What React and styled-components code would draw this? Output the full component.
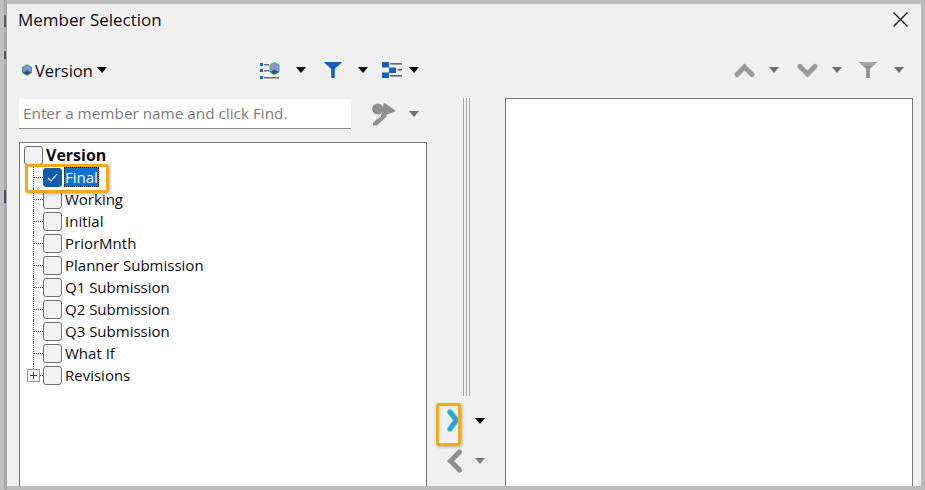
import React from "react";
import styled, { createGlobalStyle } from "styled-components";

const members = [
  "Final",
  "Working",
  "Initial",
  "PriorMnth",
  "Planner Submission",
  "Q1 Submission",
  "Q2 Submission",
  "Q3 Submission",
  "What If",
  "Revisions",
];

const GlobalStyle = createGlobalStyle`
  html, body {
    margin: 0;
    padding: 0;
    width: 925px;
    height: 490px;
    overflow: hidden;
    background: #bcbcbc;
  }
`;

const Page = styled.div`
  width: 925px;
  height: 490px;
  padding: 4px 4px 4px 7px;
  box-sizing: border-box;
  overflow: hidden;
  position: relative;
  background: linear-gradient(90deg, #c0c0c0 0 4px, #a8a8a8 4px 7px, #bcbcbc 7px);
  font-family: "Open Sans", "Noto Sans", sans-serif;
  color: #0c0c14;
`;

// slivers of the page behind the dialog, showing on the left edge
const BehindMark = styled.span`
  position: absolute;
  left: 4px;
  top: ${(p) => p.$top}px;
  width: 2px;
  height: ${(p) => p.$height}px;
  background: ${(p) => p.$color || "#5c5c5c"};
`;

const Dialog = styled.div`
  height: 482px;
  background: #f0f0f0;
  display: flex;
  flex-direction: column;
  overflow: hidden;
`;

const TitleBar = styled.div`
  height: 30px;
  padding: 0 13px 0 11px;
  display: flex;
  align-items: center;
  justify-content: space-between;
  font-size: 17px;
`;

const Toolbar = styled.div`
  height: 64px;
  box-sizing: border-box;
  padding: 8px 0 0 15px;
  display: flex;
  align-items: center;
  flex-shrink: 0;
`;

const ToolGroup = styled.div`
  display: flex;
  align-items: center;
  margin-left: ${(p) => p.$left || 0}px;
`;

const VersionLabel = styled.div`
  font-size: 16.5px;
  margin: 0 4px 0 3px;
`;

const Caret = styled.span`
  display: inline-block;
  width: 0;
  height: 0;
  margin-left: ${(p) => p.$left || 0}px;
  border-left: ${(p) => p.$size || 5.5}px solid transparent;
  border-right: ${(p) => p.$size || 5.5}px solid transparent;
  border-top: ${(p) => p.$size || 6}px solid ${(p) => p.$color || "#000"};
`;

const Body = styled.div`
  flex: 1;
  display: flex;
  min-height: 0;
`;

const LeftColumn = styled.div`
  width: 408px;
  margin-left: 12px;
  display: flex;
  flex-direction: column;
`;

const FindRow = styled.div`
  display: flex;
  align-items: center;
  height: 31px;
  margin-bottom: 13px;
`;

const FindInput = styled.div`
  width: 332px;
  height: 30px;
  box-sizing: border-box;
  background: #fff;
  border-bottom: 1px solid #8a8a8a;
  padding-left: 4px;
  font-size: 15.3px;
  line-height: 29px;
  color: #7c7c7c;
  white-space: nowrap;
`;

const TreePanel = styled.div`
  flex: 1;
  background: #fff;
  border: 1px solid #777;
  border-bottom: none;
  position: relative;
  padding-top: 1px;
`;

const TreeRow = styled.div`
  height: 22px;
  display: flex;
  align-items: center;
  font-size: 15px;
  position: relative;
`;

const Branch = styled.span`
  width: 23px;
  height: 22px;
  position: relative;
  flex-shrink: 0;

  &::before {
    content: "";
    position: absolute;
    left: 13px;
    top: 0;
    height: ${(p) => (p.$last ? 11 : 22)}px;
    border-left: 1px dotted #555;
  }

  &::after {
    content: "";
    position: absolute;
    left: 14px;
    top: 11px;
    width: 9px;
    border-top: 1px dotted #555;
  }
`;

const Check = styled.span`
  width: 19px;
  height: 19px;
  box-sizing: border-box;
  margin-left: ${(p) => (p.$root ? 4 : 0)}px;
  border-radius: 3px;
  border: 1px solid ${(p) => (p.$on ? "#0f5cb0" : "#6f6f6f")};
  background: ${(p) => (p.$on ? "#0f5cb0" : "#f2f2f2")};
  display: flex;
  align-items: center;
  justify-content: center;
  flex-shrink: 0;
  position: relative;
  z-index: 1;
`;

const MemberName = styled.span`
  margin: 0 0 1px 2px;
  padding: 0 1px;
  font-size: ${(p) => (p.$root ? 16 : 15)}px;
  font-weight: ${(p) => (p.$root ? 700 : 400)};
  line-height: 20px;
  white-space: nowrap;
  ${(p) =>
    p.$selected &&
    `
    background: #0f6fd8;
    color: #fff;
    outline: 1px dotted #111;
    outline-offset: -1px;
  `}
`;

const Expander = styled.span`
  position: absolute;
  left: 7px;
  top: 5px;
  width: 13px;
  height: 13px;
  box-sizing: border-box;
  border: 1px solid #9a9a9a;
  background: #f4f4f4;
  z-index: 1;
  color: #2b3a7a;

  &::before {
    content: "";
    position: absolute;
    left: 2px;
    right: 2px;
    top: 5px;
    height: 1px;
    background: currentColor;
  }

  &::after {
    content: "";
    position: absolute;
    top: 2px;
    bottom: 2px;
    left: 5px;
    width: 1px;
    background: currentColor;
  }
`;

const Highlight = styled.div`
  position: absolute;
  box-sizing: border-box;
  border: 3px solid #f5a81c;
  border-radius: 3px;
  box-shadow: 1px 1px 3px rgba(0, 0, 0, 0.3);
  pointer-events: none;
  z-index: 2;
`;

const FinalHighlight = styled(Highlight)`
  left: 5px;
  top: 21px;
  width: 84px;
  height: 29px;
`;

const MoveColumn = styled.div`
  width: 78px;
  display: flex;
  flex-direction: column;
  align-items: center;
  position: relative;
`;

const Splitter = styled.div`
  width: 7px;
  height: 298px;
  border-left: 1px solid #a8a8a8;
  border-right: 1px solid #a8a8a8;
  box-sizing: border-box;
  position: relative;

  &::before {
    content: "";
    position: absolute;
    left: 2px;
    top: 0;
    bottom: 0;
    width: 1px;
    background: #a8a8a8;
  }
`;

const MoveRow = styled.div`
  display: flex;
  align-items: center;
  align-self: flex-start;
  margin-left: ${(p) => p.$left}px;
  margin-top: ${(p) => p.$top}px;
  height: 30px;
`;

const MoveHighlight = styled(Highlight)`
  left: 9px;
  top: 305px;
  width: 25px;
  height: 43px;
`;

const RightPanel = styled.div`
  width: 408px;
  background: #fff;
  border: 1px solid #777;
  border-bottom: none;
  box-sizing: border-box;
`;

const CloseIcon = () => (
  <svg width="15" height="15" viewBox="0 0 15 15">
    <path d="M.5.5 14.5 14.5M14.5.5.5 14.5" stroke="#111" strokeWidth="1.3" fill="none" />
  </svg>
);

const CubeIcon = ({ size = 10 }) => (
  <svg width={size} height={size + 2} viewBox="0 0 10 12">
    <path d="M5 .7 9.4 3.2V8.8L5 11.3.6 8.8V3.2Z" fill="#8f94d8" stroke="#2f9e5a" strokeWidth="1" />
    <path d="M1 8.6 5 6.2 9 8.6 5 11Z" fill="#3a4f7a" />
  </svg>
);

const ListCubeIcon = () => (
  <svg width="20" height="17" viewBox="0 0 20 17">
    <g fill="#1b63c0">
      <rect x="0" y="1" width="3" height="3" />
      <rect x="0" y="7" width="3" height="3" />
      <rect x="0" y="14" width="3" height="3" />
    </g>
    <g fill="#707070">
      <rect x="4" y="2" width="5" height="1.5" />
      <rect x="4" y="8" width="5" height="1.5" />
      <rect x="4" y="15" width="15" height="1.5" />
    </g>
    <path d="M14.5.6 19 3V10L14.5 12.6 10 10V3Z" fill="#8f94d8" stroke="#22c55e" strokeWidth="1" />
    <path d="M10.5 10 14.5 7.6 18.5 10 14.5 12.2Z" fill="#35506e" />
  </svg>
);

const FunnelIcon = ({ color = "#0f62b8", top = "#0f62b8" }) => (
  <svg width="18" height="16" viewBox="0 0 18 16">
    <path d="M0 0H18L10.8 7V16H7.2V7Z" fill={color} />
    <path d="M0 0H18L14 4H4Z" fill={top} />
  </svg>
);

const HierarchyIcon = () => (
  <svg width="21" height="16" viewBox="0 0 21 16">
    <g fill="#1460bd">
      <rect x="0" y="0" width="7" height="5.5" />
      <rect x="7" y="5.5" width="7" height="5.5" />
      <rect x="0" y="10.5" width="7" height="5.5" />
    </g>
    <g fill="#666">
      <rect x="8" y="1" width="12" height="1.6" />
      <rect x="15.5" y="7" width="4.5" height="1.6" />
      <rect x="8" y="13" width="12" height="1.6" />
    </g>
  </svg>
);

const ChevronUpIcon = () => (
  <svg width="21" height="15" viewBox="0 0 21 15">
    <path d="M3 11.5 10.5 4 18 11.5" stroke="#9a9a9a" strokeWidth="5" fill="none" strokeLinecap="round" />
  </svg>
);

const ChevronDownIcon = () => (
  <svg width="21" height="15" viewBox="0 0 21 15">
    <path d="M3 3.5 10.5 11 18 3.5" stroke="#9a9a9a" strokeWidth="5" fill="none" strokeLinecap="round" />
  </svg>
);

const FlashlightIcon = () => (
  <svg width="25" height="24" viewBox="0 0 25 24">
    <circle cx="5.7" cy="7" r="5.6" fill="#8f8f8f" />
    <path d="M12 .5 24 9 9 15Z" fill="#8f8f8f" />
    <path d="M11 11 15 14 5 23.5H1V21Z" fill="#8f8f8f" />
    <path d="M5.5 16.5 9 14" stroke="#e4e4e4" strokeWidth="1.3" />
  </svg>
);

const MoveRightIcon = () => (
  <svg width="12" height="24" viewBox="0 0 12 24">
    <path d="M3 3 9.5 11 3 20" stroke="#22d0a0" strokeWidth="5.5" fill="none" strokeLinecap="round" />
    <path d="M3 3 9.5 11 3 20" stroke="#2f9be8" strokeWidth="3.5" fill="none" strokeLinecap="round" />
  </svg>
);

const MoveLeftIcon = () => (
  <svg width="16" height="24" viewBox="0 0 16 24">
    <path d="M12.5 3 3.5 12 12.5 21" stroke="#8f8f8f" strokeWidth="5" fill="none" strokeLinecap="round" />
  </svg>
);

const CheckMark = () => (
  <svg width="11" height="9" viewBox="0 0 11 9">
    <path d="M1 5 4 8 10 1" stroke="#fff" strokeWidth="1.1" fill="none" />
  </svg>
);

const App = () => {
  return (
    <>
      <GlobalStyle />
      <Page>
        <BehindMark $top={15} $height={12} />
        <BehindMark $top={51} $height={8} />
        <BehindMark $top={190} $height={13} $color="#4a4668" />
        <Dialog>
          <TitleBar>
            Member Selection
            <CloseIcon />
          </TitleBar>
          <Toolbar>
            <CubeIcon />
            <VersionLabel>Version</VersionLabel>
            <Caret />
            <ToolGroup $left={153}>
              <ListCubeIcon />
              <Caret $left={16} />
              <ToolGroup $left={18}>
                <FunnelIcon />
              </ToolGroup>
              <Caret $left={16} />
              <ToolGroup $left={14}>
                <HierarchyIcon />
              </ToolGroup>
              <Caret $left={6} />
            </ToolGroup>
            <ToolGroup $left={315}>
              <ChevronUpIcon />
              <Caret $left={14} $color="#6f6f6f" />
              <ToolGroup $left={18}>
                <ChevronDownIcon />
              </ToolGroup>
              <Caret $left={14} $color="#6f6f6f" />
              <ToolGroup $left={17}>
                <FunnelIcon color="#8f8f8f" top="#a4a4a4" />
              </ToolGroup>
              <Caret $left={17} $color="#6f6f6f" />
            </ToolGroup>
          </Toolbar>
          <Body>
            <LeftColumn>
              <FindRow>
                <FindInput>Enter a member name and click Find.</FindInput>
                <ToolGroup $left={21}>
                  <FlashlightIcon />
                  <Caret $left={12} $color="#6f6f6f" />
                </ToolGroup>
              </FindRow>
              <TreePanel>
                <FinalHighlight />
                <TreeRow>
                  <Check $root />
                  <MemberName $root>Version</MemberName>
                </TreeRow>
                {members.map((name, i) => {
                  const last = i === members.length - 1;
                  return (
                    <TreeRow key={name}>
                      <Branch $last={last} />
                      {last && <Expander />}
                      <Check $on={i === 0}>{i === 0 && <CheckMark />}</Check>
                      <MemberName $selected={i === 0}>{name}</MemberName>
                    </TreeRow>
                  );
                })}
              </TreePanel>
            </LeftColumn>
            <MoveColumn>
              <MoveHighlight />
              <Splitter />
              <MoveRow $left={20} $top={10}>
                <MoveRightIcon />
                <Caret $left={16} />
              </MoveRow>
              <MoveRow $left={20} $top={10}>
                <MoveLeftIcon />
                <Caret $left={12} $color="#7a7a7a" />
              </MoveRow>
            </MoveColumn>
            <RightPanel />
          </Body>
        </Dialog>
      </Page>
    </>
  );
};

export default App;
